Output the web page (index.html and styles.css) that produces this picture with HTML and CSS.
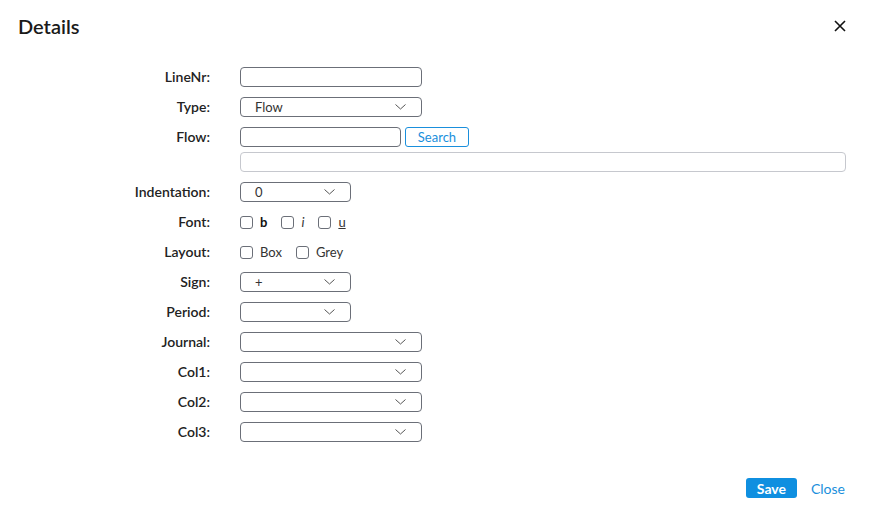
FILE: index.html
```html
<!DOCTYPE html>
<html>
<head>
<meta charset="utf-8">
<link rel="stylesheet" href="styles.css">
</head>
<body>
<div class="dialog">
  <header class="head">
    <h1 class="title">Details</h1>
    <span class="close-x"><svg width="12" height="12" viewBox="0 0 12 12"><path d="M1 1L11 11M11 1L1 11" stroke="#111" stroke-width="1.6" fill="none"/></svg></span>
  </header>
  <div class="form">
    <div class="lbl">LineNr:</div>
    <div class="ctl"><span class="field w182"></span></div>

    <div class="lbl">Type:</div>
    <div class="ctl"><span class="field sel w182"><span class="val">Flow</span><svg class="chev" width="11" height="6" viewBox="0 0 11 6"><path d="M0.5 0.5L5.5 5L10.5 0.5" stroke="#555" stroke-width="1" fill="none"/></svg></span></div>

    <div class="lbl">Flow:</div>
    <div class="ctl stack">
      <div class="inline"><span class="field w161"></span><span class="btn-outline">Search</span></div>
      <span class="field wide light"></span>
    </div>

    <div class="lbl">Indentation:</div>
    <div class="ctl"><span class="field sel w111"><span class="val">0</span><svg class="chev" width="11" height="6" viewBox="0 0 11 6"><path d="M0.5 0.5L5.5 5L10.5 0.5" stroke="#555" stroke-width="1" fill="none"/></svg></span></div>

    <div class="lbl">Font:</div>
    <div class="ctl checks">
      <span class="chk"><span class="box"></span><b class="cb-b">b</b></span>
      <span class="chk"><span class="box"></span><i class="cb-i">i</i></span>
      <span class="chk"><span class="box"></span><u class="cb-u">u</u></span>
    </div>

    <div class="lbl">Layout:</div>
    <div class="ctl checks">
      <span class="chk"><span class="box"></span><span>Box</span></span>
      <span class="chk"><span class="box"></span><span>Grey</span></span>
    </div>

    <div class="lbl">Sign:</div>
    <div class="ctl"><span class="field sel w111"><span class="val">+</span><svg class="chev" width="11" height="6" viewBox="0 0 11 6"><path d="M0.5 0.5L5.5 5L10.5 0.5" stroke="#555" stroke-width="1" fill="none"/></svg></span></div>

    <div class="lbl">Period:</div>
    <div class="ctl"><span class="field sel w111"><span class="val"></span><svg class="chev" width="11" height="6" viewBox="0 0 11 6"><path d="M0.5 0.5L5.5 5L10.5 0.5" stroke="#555" stroke-width="1" fill="none"/></svg></span></div>

    <div class="lbl">Journal:</div>
    <div class="ctl"><span class="field sel w182"><span class="val"></span><svg class="chev" width="11" height="6" viewBox="0 0 11 6"><path d="M0.5 0.5L5.5 5L10.5 0.5" stroke="#555" stroke-width="1" fill="none"/></svg></span></div>

    <div class="lbl">Col1:</div>
    <div class="ctl"><span class="field sel w182"><span class="val"></span><svg class="chev" width="11" height="6" viewBox="0 0 11 6"><path d="M0.5 0.5L5.5 5L10.5 0.5" stroke="#555" stroke-width="1" fill="none"/></svg></span></div>

    <div class="lbl">Col2:</div>
    <div class="ctl"><span class="field sel w182"><span class="val"></span><svg class="chev" width="11" height="6" viewBox="0 0 11 6"><path d="M0.5 0.5L5.5 5L10.5 0.5" stroke="#555" stroke-width="1" fill="none"/></svg></span></div>

    <div class="lbl">Col3:</div>
    <div class="ctl"><span class="field sel w182"><span class="val"></span><svg class="chev" width="11" height="6" viewBox="0 0 11 6"><path d="M0.5 0.5L5.5 5L10.5 0.5" stroke="#555" stroke-width="1" fill="none"/></svg></span></div>
  </div>
  <footer class="foot">
    <span class="btn-primary">Save</span>
    <span class="link">Close</span>
  </footer>
</div>
</body>
</html>
```

FILE: styles.css
```css
html, body {
  margin: 0;
  padding: 0;
  background: #ffffff;
}
body {
  font-family: Lato, "Open Sans", Arial, sans-serif;
  color: #222;
  font-size: 13px;
}
.dialog {
  height: 519px;
  box-sizing: border-box;
  display: flex;
  flex-direction: column;
}
.head {
  display: flex;
  justify-content: space-between;
  align-items: center;
  padding: 12px 28px 0 18px;
  height: 28px;
}
.title {
  margin: 0;
  font-size: 20px;
  font-weight: 600;
  line-height: 24px;
  color: #1a1a1a;
}
.close-x {
  display: flex;
  width: 12px;
  height: 12px;
}
.form {
  display: grid;
  grid-template-columns: 210px 1fr;
  column-gap: 30px;
  row-gap: 10px;
  padding: 27px 28px 0 0;
}
.lbl {
  text-align: right;
  font-weight: 600;
  font-size: 14px;
  color: #222;
  line-height: 20px;
  align-self: start;
  height: 20px;
}
.ctl {
  display: flex;
  align-items: center;
  min-height: 20px;
}
.stack {
  flex-direction: column;
  align-items: stretch;
  gap: 5px;
}
.inline {
  display: flex;
  gap: 4px;
}
.field {
  display: flex;
  align-items: center;
  box-sizing: border-box;
  height: 20px;
  border: 1px solid #6b6f78;
  border-radius: 4px;
  background: #fff;
}
.w182 { width: 182px; }
.w161 { width: 161px; }
.w111 { width: 111px; }
.wide { width: 100%; }
.light { border-color: #c6c8ce; }
.sel {
  justify-content: space-between;
  padding: 0 15px 0 14px;
}
.val {
  font-size: 13px;
  color: #333;
  line-height: 18px;
}
.chev { display: block; }
.btn-outline {
  box-sizing: border-box;
  width: 64px;
  height: 20px;
  border: 1px solid #1a8fdc;
  border-radius: 3px;
  color: #1a8fdc;
  font-size: 13px;
  display: flex;
  align-items: center;
  justify-content: center;
  line-height: 18px;
}
.checks {
  gap: 14px;
}
.chk {
  display: flex;
  align-items: center;
  gap: 7px;
  color: #333;
  font-size: 13px;
}
.box {
  box-sizing: border-box;
  width: 13px;
  height: 13px;
  border: 1px solid #6b6f78;
  border-radius: 3px;
}
.cb-b { font-weight: 700; color: #111; }
.cb-i { font-style: italic; font-weight: 400; }
.cb-u { text-decoration: underline; }
.foot {
  margin-top: auto;
  display: flex;
  justify-content: flex-end;
  align-items: center;
  gap: 14px;
  padding: 0 29px 21px 0;
}
.btn-primary {
  box-sizing: border-box;
  width: 51px;
  height: 20px;
  background: #0f8fe0;
  color: #fff;
  border-radius: 3px;
  font-size: 14px;
  font-weight: 700;
  display: flex;
  align-items: center;
  justify-content: center;
}
.link {
  color: #1a8fdc;
  font-size: 14px;
}
```
